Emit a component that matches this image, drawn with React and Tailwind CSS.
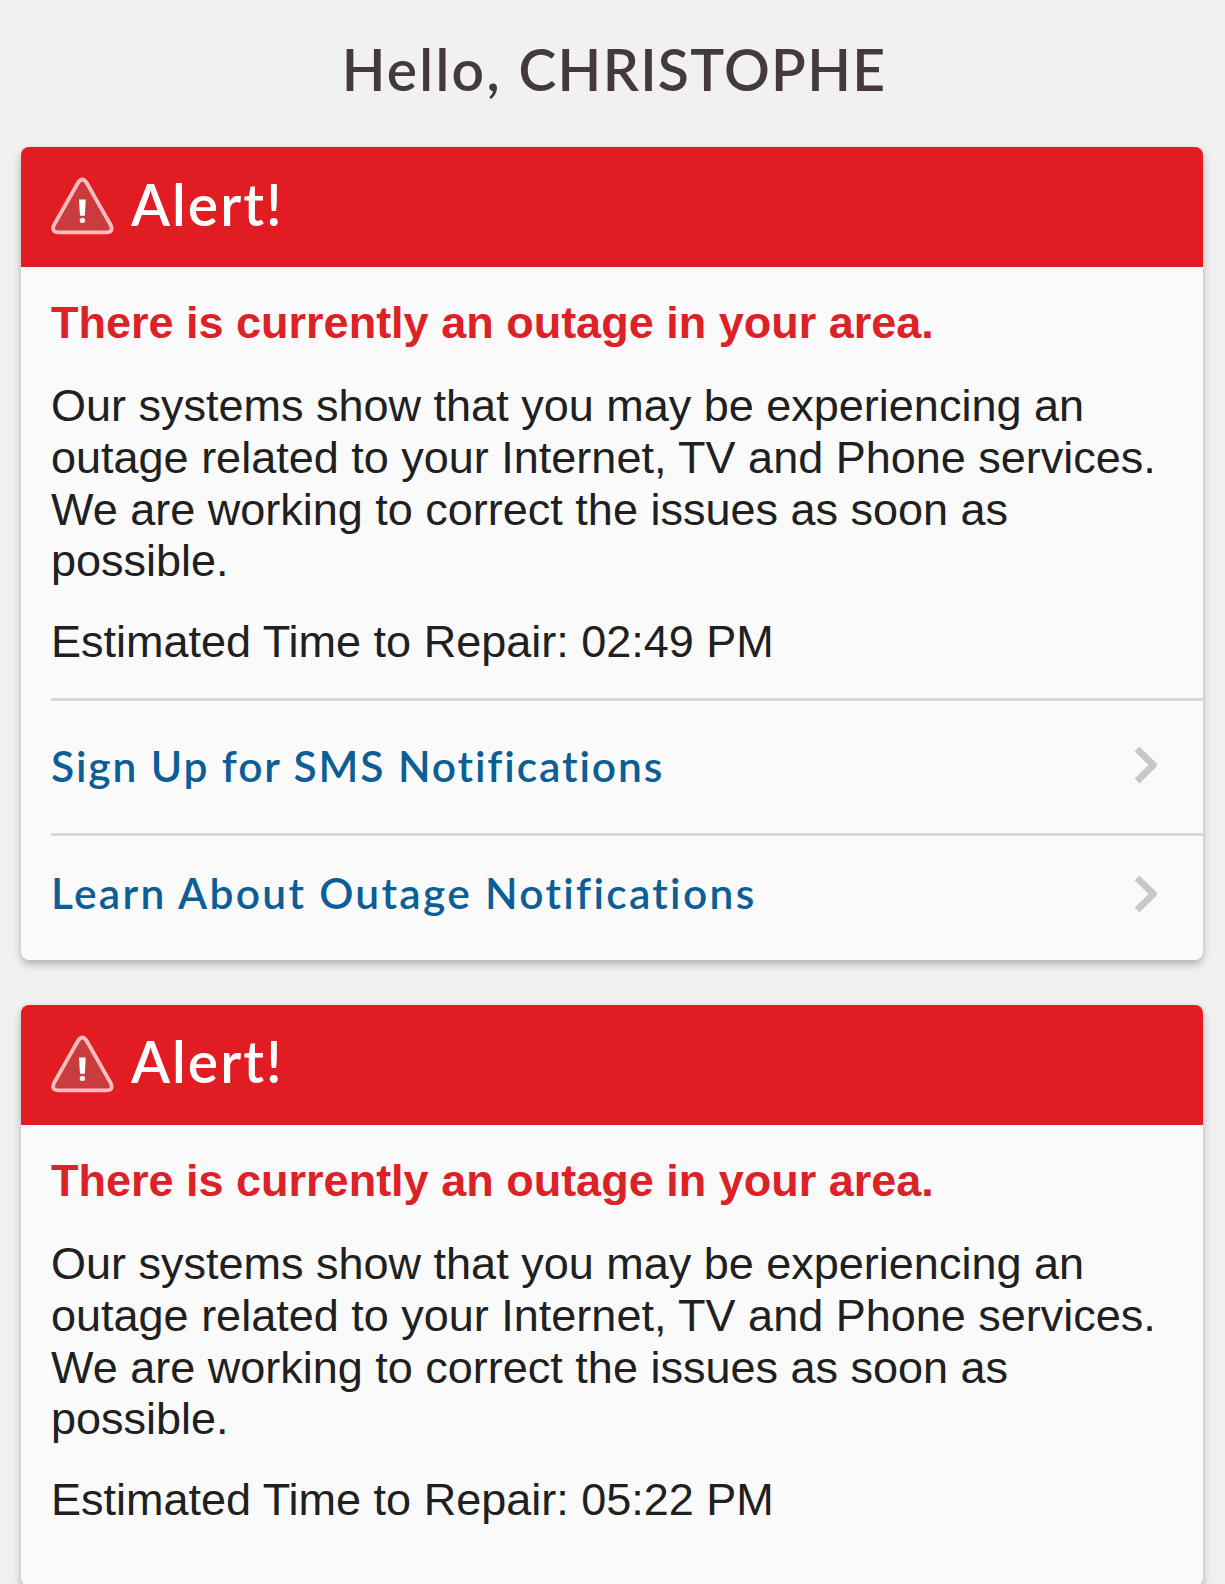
import React from "react";

function WarningIcon() {
  return (
    <svg width="64" height="60" viewBox="0 0 64 60" fill="none" className="shrink-0">
      <path
        d="M27.3 5.3 Q31.3 -0.3 35.3 5.3 L59.7 48 Q62.8 55 55.8 55.3 H7.2 Q0 55 3 48 Z"
        fill="#c93b3c"
        stroke="#ffbcbe"
        strokeWidth="3.8"
        strokeLinejoin="round"
      />
      <path d="M28 22.5 H34.7 L33.9 38.8 H29 Z" fill="#fff" />
      <circle cx="31.4" cy="43.4" r="2.7" fill="#ffecec" />
    </svg>
  );
}

function Chevron() {
  return (
    <svg width="26" height="40" viewBox="0 0 26 40" fill="none" className="shrink-0">
      <path d="M3 4 L19.4 20 L3 36" stroke="#c8c8c8" strokeWidth="6.8" strokeLinejoin="round" />
    </svg>
  );
}

function AlertCard({ time, children }) {
  return (
    <section className="overflow-hidden rounded-lg bg-[#fafafa] shadow-[0_4px_8px_rgba(0,0,0,0.28)]">
      <header className="flex h-[120px] items-center bg-[#e11d23] pl-[30px]">
        <WarningIcon />
        <h2 className="ml-[16px] pb-1.5 font-['Lato',sans-serif] text-[57px] leading-none font-semibold tracking-[2px] text-white">
          Alert!
        </h2>
      </header>
      <div className="pt-[30px] pr-5 pl-[30px] text-[45px] leading-[51.75px] text-[#202020]">
        <p className="font-bold whitespace-nowrap text-[#dc2127]">There is currently an outage in your area.</p>
        <p className="mt-[31.4px]">
          Our systems show that you may be experiencing an outage related to your Internet, TV and Phone services. We
          are working to correct the issues as soon as possible.
        </p>
        <p className="mt-[28.6px]">Estimated Time to Repair: {time}</p>
      </div>
      {children}
    </section>
  );
}

export default function App() {
  return (
    <main className="h-[1584px] overflow-hidden bg-[#f1f1f1] px-[21px] pr-[22px] font-['Liberation_Sans',sans-serif]">
      <h1 className="flex h-[147px] items-center justify-center pb-[9px] pl-1 font-['Lato',sans-serif] text-[57px] leading-none font-semibold whitespace-pre text-[#453a3b]">
        <span className="tracking-[2.3px]">Hello, </span>
        <span className="tracking-[1.3px]">CHRISTOPHE</span>
      </h1>
      <AlertCard time="02:49 PM">
        <nav className="mt-[30.5px] ml-[30px] font-['Lato',sans-serif] text-[42.5px] leading-none font-semibold text-[#0b5e96]">
          <a className="flex h-[135px] items-center justify-between border-t-3 border-[#d9d9d9] pr-[43px] pb-[3px]">
            <span className="pt-0.5 tracking-[1.9px]">Sign Up for SMS Notifications</span>
            <Chevron />
          </a>
          <a className="flex h-[127px] items-center justify-between border-t-3 border-[#d9d9d9] pr-[43px] pb-[7px]">
            <span className="pb-0.5 tracking-[2.3px]">Learn About Outage Notifications</span>
            <Chevron />
          </a>
        </nav>
      </AlertCard>
      <div className="h-[45px]" />
      <AlertCard time="05:22 PM">
        <div className="h-[61px]" />
      </AlertCard>
    </main>
  );
}
